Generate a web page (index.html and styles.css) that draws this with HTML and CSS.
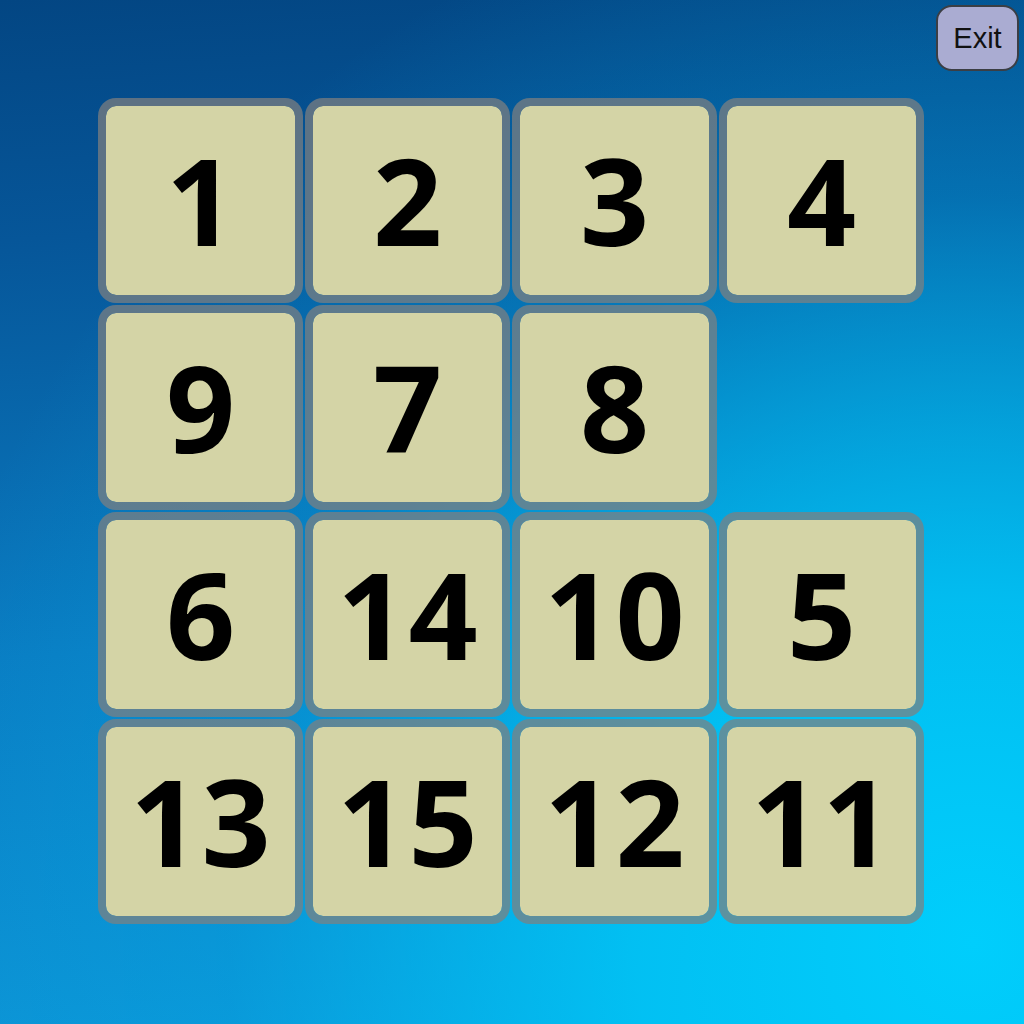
FILE: index.html
```html
<!DOCTYPE html>
<html lang="en">
<head>
<meta charset="utf-8">
<title>15 Puzzle</title>
<link rel="stylesheet" href="styles.css">
</head>
<body>
<div class="page">
  <button class="exit">Exit</button>
  <div class="board">
    <div class="tile">1</div>
    <div class="tile">2</div>
    <div class="tile">3</div>
    <div class="tile">4</div>
    <div class="tile">9</div>
    <div class="tile">7</div>
    <div class="tile">8</div>
    <div class="slot"></div>
    <div class="tile">6</div>
    <div class="tile">14</div>
    <div class="tile">10</div>
    <div class="tile">5</div>
    <div class="tile">13</div>
    <div class="tile">15</div>
    <div class="tile">12</div>
    <div class="tile">11</div>
  </div>
</div>
</body>
</html>
```
FILE: styles.css
```css
html, body {
  margin: 0;
  padding: 0;
  height: 100%;
}
body {
  background:
    radial-gradient(circle at 95% 92%, rgba(0, 206, 252, 1) 0%, rgba(0, 200, 248, 0.85) 25%, rgba(0, 170, 230, 0.3) 55%, rgba(0, 150, 220, 0) 80%),
    linear-gradient(176deg, #034683 0%, #065699 22%, #0a7cc2 60%, #0d97d8 100%);
  font-family: "Open Sans", "Noto Sans", sans-serif;
}
.page {
  position: relative;
  width: 1024px;
  height: 1024px;
  box-sizing: border-box;
  padding: 98px 0 0 98px;
}
.exit {
  position: absolute;
  top: 5px;
  right: 5px;
  width: 83px;
  height: 66px;
  box-sizing: border-box;
  border: 2px solid #3b3e44;
  border-radius: 16px;
  background: #aaacd2;
  font-family: "Liberation Sans", Arial, sans-serif;
  font-size: 29px;
  color: #111;
  padding: 0;
  cursor: pointer;
}
.board {
  display: grid;
  grid-template-columns: repeat(4, 205px);
  grid-template-rows: repeat(4, 205px);
  gap: 2px;
}
.tile {
  box-sizing: border-box;
  border: 8px solid rgba(128, 128, 128, 0.72);
  border-radius: 18px;
  background: #d4d4a6;
  background-clip: padding-box;
  display: flex;
  align-items: center;
  justify-content: center;
  font-weight: 700;
  font-size: 121px;
  color: #000;
  padding-bottom: 4px;
  letter-spacing: 2px;
  text-indent: 2px;
}
```
